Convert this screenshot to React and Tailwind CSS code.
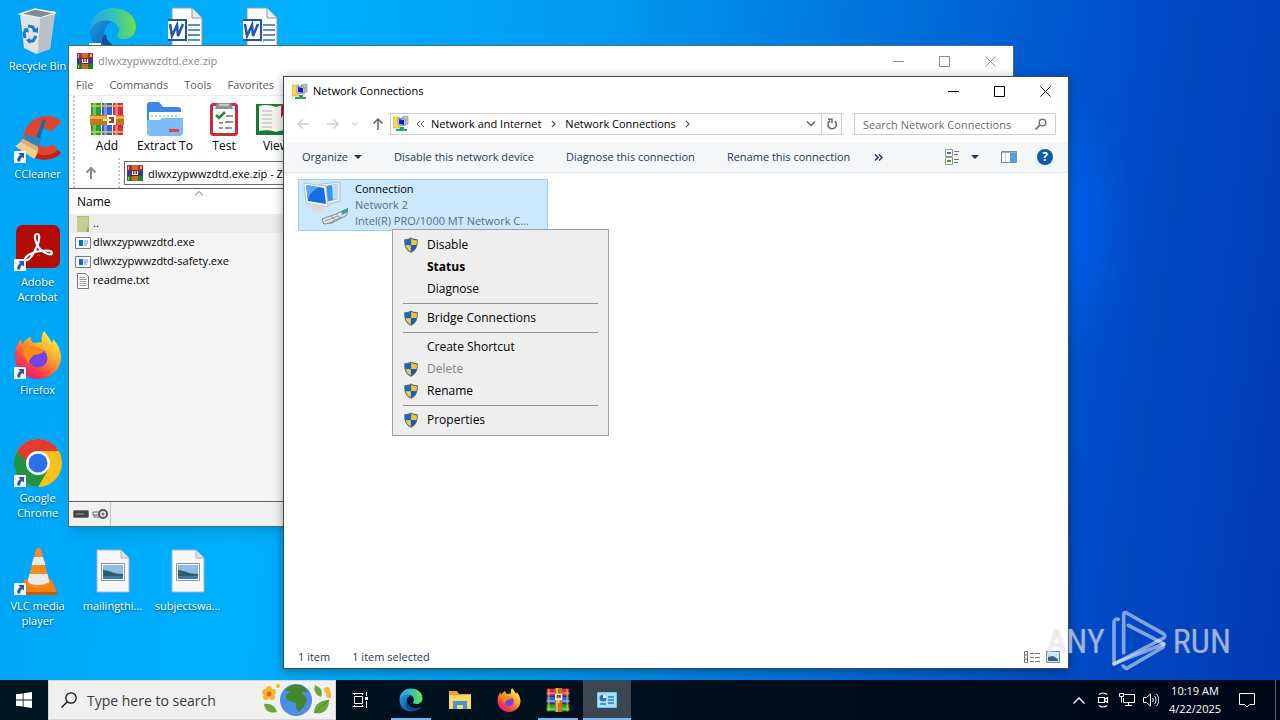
import clsx from 'clsx'

/* ---------- shared drawings ---------- */

function Svg({ className, box = '0 0 16 16', children }) {
  return (
    <svg className={clsx('block shrink-0', className)} viewBox={box} fill="none" aria-hidden="true">
      {children}
    </svg>
  )
}

function ShortcutArrow() {
  return (
    <Svg className="absolute bottom-0 left-0 size-3" box="0 0 12 12">
      <path d="M0 0h12v12H0z" fill="#f4f6fa" />
      <path d="M4.500 2H10v5.500L8.300 5.900C6.600 7 6.100 8.300 6.200 10.500H3.600C2.800 7.800 3.800 5.500 6.300 3.900z" fill="#2a57a5" />
    </Svg>
  )
}

function RecycleIcon({ className }) {
  return (
    <Svg className={className} box="0 0 48 48">
      <path d="M6 7l35-3-5 38-14 5-12-6z" fill="#d9dde0" />
      <path d="M6 7l15-5 21 4-16 5z" fill="#7d8b93" stroke="#f3f5f6" strokeWidth="1.500" />
      <path d="M26 11l15-4-5 35-12 4z" fill="#b9c1c6" />
      <path d="M7 8l19 3-3 34-12-5z" fill="#dfe3e6" />
      <path d="M14 19l5 1 2 5M22 29l-3 5h-5M11 31l-1-5 3-4" stroke="#1c78c8" strokeWidth="3" />
      <path d="M18 24l6 2 0-6zM16 31l0 6-4-4zM9 22l5-1 1 5z" fill="#1c78c8" />
    </Svg>
  )
}

function EdgeIcon({ className }) {
  return (
    <Svg className={className} box="0 0 48 48">
      <defs>
        <linearGradient id="edge-top" x1="2" y1="22" x2="46" y2="18" gradientUnits="userSpaceOnUse">
          <stop stopColor="#2aa8e0" />
          <stop offset=".5" stopColor="#2fc2c0" />
          <stop offset="1" stopColor="#6fdc4c" />
        </linearGradient>
        <linearGradient id="edge-low" x1="2" y1="20" x2="30" y2="48" gradientUnits="userSpaceOnUse">
          <stop stopColor="#1b8fdd" />
          <stop offset="1" stopColor="#0d4f9e" />
        </linearGradient>
      </defs>
      <path d="M1 24C1 10 11 1 24 1c14 0 23 9 23 19 0 8-6 12-12 12-5 0-8-2-7-4 3-3 3-8-2-12-7-5-19-3-25 8z" fill="url(#edge-top)" />
      <path d="M1 24c3-9 15-13 22-9-6 2-9 9-7 16 3 9 15 13 26 7-5 7-11 9-18 9C11 47 1 37 1 24z" fill="url(#edge-low)" />
      <path d="M17 27c0 8 8 14 17 13 5 0 9-2 10-3 1 0-1 3-4 5-7 5-17 5-23-1-5-5-5-11 0-14z" fill="#114a8b" />
    </Svg>
  )
}

function WordIcon({ className }) {
  return (
    <Svg className={className} box="3 0 40 48">
      <path d="M7 1h20l10 10v36H7z" fill="#fff" stroke="#8e9aa5" />
      <path d="M27 1v10h10" fill="#e7ebef" stroke="#8e9aa5" />
      <path d="M23 18h12M23 23h12M23 28h12M23 33h12" stroke="#2b6bc0" strokeWidth="1.500" />
      <path d="M1 13h20v20H1z" fill="#fff" stroke="#1e56b0" strokeWidth="2" />
      <path d="M5 17l2 12 5-11 1 11 5-12" stroke="#1e56b0" strokeWidth="2.500" />
    </Svg>
  )
}

function CCleanerIcon({ className }) {
  return (
    <Svg className={className} box="0 0 48 48">
      <path d="M47 7C41-1 25-1 16 8c-9 9-9 24 0 32 9 7 24 6 31-2l-9-9c-4 4-10 4-13 0-4-4-3-10 0-13 4-4 9-3 12 1z" fill="#e2452d" />
      <path d="M16 40c9 7 24 6 31-2l-3-3c-8 7-19 7-26 0z" fill="#b92718" />
      <path d="M29 4l3 1-6 19-4-2z" fill="#196aa8" />
      <path d="M13 19l14 6c-1 5-3 7-5 8L9 25z" fill="#2b83c3" />
      <path d="M9 24l15 8c0 5-1 8-4 12L1 31c2-1 6-4 8-7z" fill="#f1cf95" />
      <path d="M9 24l15 8-1 4-17-9z" fill="#e0b070" />
    </Svg>
  )
}

function AcrobatIcon({ className }) {
  return (
    <Svg className={className} box="0 0 48 48">
      <rect x="2" y="2" width="44" height="43" rx="7" fill="#b30b00" />
      <path
        d="M23 11c3 0 3 5 0 12-3 8-8 15-11 14-3-2 4-8 15-9 8-1 11 0 11 2 0 3-7 1-12-4-5-6-7-15-3-15z"
        stroke="#fff"
        strokeWidth="2.200"
      />
    </Svg>
  )
}

function FirefoxIcon({ className }) {
  return (
    <Svg className={className} box="0 0 48 48">
      <defs>
        <linearGradient id="fx-body" x1="40" y1="6" x2="10" y2="46" gradientUnits="userSpaceOnUse">
          <stop stopColor="#fff04a" />
          <stop offset=".4" stopColor="#ff9d28" />
          <stop offset=".75" stopColor="#ff3b47" />
          <stop offset="1" stopColor="#e31587" />
        </linearGradient>
      </defs>
      <path d="M30 0c4 5 6 8 8 12 1-1 1-3 1-4 5 5 8 12 8 18 0 12-10 22-23 22S1 38 1 25c0-7 2-12 6-17 0 3 1 4 2 5 1-3 4-6 8-7-1 3 1 5 3 6l8-1c-1-4 0-8 2-11z" fill="url(#fx-body)" />
      <circle cx="24" cy="27" r="9.500" fill="#7542e5" />
      <path d="M8 15c5-2 12-1 16 3 4 0 7 1 6 2-2 3-6 3-10 4-2 2-5 4-5 8-4-5-7-11-7-17z" fill="#ff8a16" />
    </Svg>
  )
}

function ChromeIcon({ className }) {
  return (
    <Svg className={className} box="0 0 48 48">
      <circle cx="24" cy="24" r="24" fill="#fbc116" />
      <path d="M3.200 12a24 24 0 0 1 41.600 0H24L13.600 30z" fill="#e53a2f" />
      <path d="M3.200 12a24 24 0 0 0 20.800 36l10.400-18-10.400 6z" fill="#229342" />
      <path d="M3.200 12l10.400 18L24 36l10.400-6L24 48z" fill="#229342" />
      <circle cx="24" cy="24" r="12" fill="#fff" />
      <circle cx="24" cy="24" r="9.500" fill="#2a71e8" />
    </Svg>
  )
}

function VlcIcon({ className }) {
  return (
    <Svg className={className} box="0 0 48 48">
      <path d="M11 32h26l6 13c0 2-1 2-2 2H7c-1 0-2 0-2-2z" fill="#f08010" />
      <path d="M5 45h38v3H5z" fill="#c95c05" />
      <path d="M22 3c1-3 4-3 5 0l9 34c-6 5-18 5-23 0z" fill="#ff8a1c" />
      <path d="M20 10h9l2.500 8h-14zM15.500 27h18l2 8c-6 4-17 4-22 0z" fill="#e9e9e9" />
    </Svg>
  )
}

function PictureFileIcon({ className }) {
  return (
    <Svg className={className} box="0 0 34 44">
      <path d="M1 1h24l8 8v34H1z" fill="#f7f7f8" stroke="#a9b4bc" />
      <path d="M25 1v8h8" fill="#dfe3e7" stroke="#a9b4bc" />
      <path d="M5.500 14.500h23v17h-23z" fill="#fff" stroke="#8a99a8" />
      <path d="M7 16h20v14H7z" fill="#8fbbea" />
      <path d="M7 21c6 0 10 4 20 4v5H7z" fill="#2d5f6b" />
      <path d="M7 27h20v3H7z" fill="#3f79b5" />
    </Svg>
  )
}

// The three books held by a belt; upright in the toolbar, lying down elsewhere
function WinRarIcon({ className, upright }) {
  return (
    <Svg className={className} box="0 0 34 34">
      <g transform={upright ? undefined : 'rotate(-90 17 17)'}>
        <path d="M1 1h10v32H1z" fill="#22a12c" />
        <path d="M12 1h10v32H12z" fill="#2e62d9" />
        <path d="M23 1h10v32H23z" fill="#d72a4c" />
        <path d="M3 1h3v32H3zM14 1h3v32h-3zM25 1h3v32h-3z" fill="#fff" opacity=".35" />
        <path d="M1 3h32v2H1zM1 29h32v2H1z" fill="#f0c030" opacity=".75" />
        <path d="M0 13h34v10H0z" fill="#c4741b" />
        <path d="M0 14h34v3H0z" fill="#f0ac46" />
        <path d="M18 14h7v8h-7z" fill="#9b4a12" stroke="#fff" strokeWidth="2" />
        <path d="M13 18h8" stroke="#ffe6a0" strokeWidth="2" />
      </g>
    </Svg>
  )
}

function SmallRarIcon({ className }) {
  return (
    <Svg className={className}>
      <path d="M0 0h16v5H0z" fill="#a8275c" />
      <path d="M0 5h16v6H0z" fill="#2c3f9c" />
      <path d="M0 11h16v5H0z" fill="#1f7d2e" />
      <path d="M1 1h1v4H1zM1 12h1v3H1zM13 1h2v3h-2z" fill="#e8b53a" />
      <path d="M5 0h6v16H5z" fill="#cc6a20" />
      <path d="M4 5h8v6H4z" fill="#8b1d13" />
      <path d="M5.500 6v3.500h5V6M8 6v3" stroke="#fff" strokeWidth="1.200" />
    </Svg>
  )
}

function NetworkFolderIcon({ className }) {
  return (
    <Svg className={className}>
      <path d="M0 1h7v11H0z" fill="#f5d560" stroke="#c9a52c" strokeWidth=".6" />
      <path d="M9 1l6-1v8l-4 1z" fill="#b9c4cf" stroke="#74818e" strokeWidth=".6" />
      <path d="M5 2l7 1v7l-7-1z" fill="#e8edf2" stroke="#65707b" strokeWidth=".6" />
      <path d="M6 3l5 1v5L6 8z" fill="#1420c8" />
      <path d="M7 11h4v2h3v2H3v-2h4z" fill="#27a56a" />
    </Svg>
  )
}

function ConnectionIcon({ className }) {
  return (
    <Svg className={className} box="0 0 48 48">
      <path d="M18 3l19-2v19l-14 4z" fill="#eef1f3" stroke="#b3bcc4" />
      <path d="M22 5l13-2v15l-12 3z" fill="#3b93f2" />
      <path d="M29 4l6-1v15l-5 1z" fill="#b8dcfa" />
      <path d="M9 23l11 3 4 3c0 3-12 4-16 0-2-2 0-4 1-6z" fill="#d9dce0" />
      <path d="M1 2l22 3 2 21L3 22z" fill="#f7f8f9" stroke="#bcc4ca" />
      <path d="M3 4l18 3 2 16L5 20z" fill="#176be6" />
      <path d="M3 4l13 2C10 9 6 13 5 20z" fill="#5aa6fa" />
      <path d="M19 38l14-5 11-5v6l-15 8-8 1z" fill="#dfe5e8" stroke="#7b8a92" />
      <path d="M22 40l13-5M26 42l13-6M33 33l4 4M28 35l4 4" stroke="#8b979e" />
      <path d="M38 30l7-3v4l-6 3z" fill="#3e9fa3" />
    </Svg>
  )
}

function ShieldIcon() {
  return (
    <Svg className="size-4">
      <path d="M8 .5C6 1.800 3.800 2.300 1.200 2.200c-.2 6.500 1.200 11 6.800 13.500 5.600-2.500 7-7 6.800-13.500C12.200 2.300 10 1.800 8 .5z" fill="#5a6a78" />
      <path d="M7.800 1.700C6 2.900 4.300 3.200 2.200 3.200c-.1 1.700 0 3.200.4 4.700h5.200z" fill="#1668c9" />
      <path d="M8.200 1.700c1.800 1.200 3.500 1.500 5.600 1.500.1 1.700 0 3.200-.4 4.700H8.200z" fill="#fbc32e" />
      <path d="M2.700 8.200h5.100v6.300C5.100 13.100 3.400 11 2.700 8.200z" fill="#e9cf62" />
      <path d="M13.300 8.200H8.200v6.300c2.700-1.400 4.400-3.500 5.100-6.300z" fill="#1359ad" />
    </Svg>
  )
}

/* ---------- desktop ---------- */

const DESKTOP_ICONS = [
  { id: 'recycle', label: 'Recycle Bin', Icon: RecycleIcon, cell: 'col-start-1 row-start-1' },
  { id: 'edge', Icon: EdgeIcon, cell: 'col-start-2 row-start-1', shortcut: true },
  { id: 'doc-1', Icon: WordIcon, cell: 'col-start-3 row-start-1', size: 'h-12 w-10' },
  { id: 'doc-2', Icon: WordIcon, cell: 'col-start-4 row-start-1', size: 'h-12 w-10' },
  { id: 'ccleaner', label: 'CCleaner', Icon: CCleanerIcon, cell: 'col-start-1 row-start-2', shortcut: true },
  { id: 'acrobat', label: 'Adobe Acrobat', Icon: AcrobatIcon, cell: 'col-start-1 row-start-3', shortcut: true },
  { id: 'firefox', label: 'Firefox', Icon: FirefoxIcon, cell: 'col-start-1 row-start-4', shortcut: true },
  { id: 'chrome', label: 'Google Chrome', Icon: ChromeIcon, cell: 'col-start-1 row-start-5', shortcut: true },
  { id: 'vlc', label: 'VLC media player', Icon: VlcIcon, cell: 'col-start-1 row-start-6', shortcut: true },
  { id: 'img-1', label: 'mailingthi...', Icon: PictureFileIcon, cell: 'col-start-2 row-start-6', size: 'h-11 w-[34px]' },
  { id: 'img-2', label: 'subjectswa...', Icon: PictureFileIcon, cell: 'col-start-3 row-start-6', size: 'h-11 w-[34px]' },
]

function DesktopIcon({ id, label, Icon, cell, size = 'size-12', shortcut }) {
  return (
    <button type="button" aria-label={label ?? id} className={clsx('flex flex-col items-center pt-[7px] text-white', cell)}>
      <span className="relative flex size-12 items-center justify-center">
        <Icon className={size} />
        {shortcut && <ShortcutArrow />}
      </span>
      {label && (
        <span className="w-[68px] pt-[3px] text-center leading-[15px] [text-shadow:0_1px_2px_rgba(0,0,0,0.6)]">
          {label}
        </span>
      )}
    </button>
  )
}

function CaptionButtons() {
  return (
    <div className="flex h-full">
      <button type="button" aria-label="Minimize" className="flex w-[46px] items-center justify-center">
        <Svg className="size-[11px]" box="0 0 11 11">
          <path d="M0 5.500h11" stroke="currentColor" />
        </Svg>
      </button>
      <button type="button" aria-label="Maximize" className="flex w-[46px] items-center justify-center">
        <Svg className="size-[11px]" box="0 0 11 11">
          <path d="M.5.5h10v10H.5z" stroke="currentColor" />
        </Svg>
      </button>
      <button type="button" aria-label="Close" className="flex w-[46px] items-center justify-center">
        <Svg className="size-[11px]" box="0 0 11 11">
          <path d="M.5.5l10 10M10.500.5l-10 10" stroke="currentColor" />
        </Svg>
      </button>
    </div>
  )
}

/* ---------- archive window ---------- */

function ExtractIcon() {
  return (
    <Svg className="h-[34px] w-9" box="0 0 36 34">
      <path d="M0 3c0-2 1-3 3-3h9l4 5h15c2 0 3 1 3 3v20H0z" fill="#3d86e8" />
      <path d="M2 10h32v10H2z" fill="#f8fafc" />
      <path d="M5 13v2M9 13v2M13 13v2M17 13v2M21 13v2M25 13v2M29 13v2" stroke="#9aa8b5" />
      <path d="M0 18h13l2-2h21v14c0 2-1 4-3 4H3c-2 0-3-2-3-4z" fill="#7dbcf8" />
      <path d="M22 27h10v3H22z" fill="#e5482f" />
    </Svg>
  )
}

function TestIcon() {
  return (
    <Svg className="h-[34px] w-7" box="0 0 28 34">
      <rect x="1.500" y="2.500" width="25" height="30" rx="2" fill="#fff" stroke="#cf2a38" strokeWidth="3" />
      <path d="M7 1h14l2 6H5z" fill="#8a9298" />
      <path d="M9 3h10" stroke="#fff" />
      <path d="M6 13l3 3 6-6" stroke="#1f8a3a" strokeWidth="2.500" />
      <path d="M16 14h7M9 21h4M15 20h8M9 26h4M15 26h7" stroke="#777" strokeWidth="1.500" />
    </Svg>
  )
}

function ViewIcon() {
  return (
    <Svg className="h-[34px] w-10" box="0 0 40 34">
      <path d="M0 2h40v31H0z" fill="#1c7a35" />
      <path d="M3 4c6-2 12-1 17 1v25c-5-2-11-2-17-1zM37 4c-6-2-12-1-17 1v25c5-2 11-2 17-1z" fill="#f4f4f1" />
      <path d="M6 9h10M6 13h10M6 17h10M6 21h10M6 25h10" stroke="#b5b5b0" />
      <path d="M25 2h5v14l-3-3-2 3z" fill="#b1222d" />
    </Svg>
  )
}

function ExeIcon() {
  return (
    <Svg className="h-3 w-4" box="0 0 16 12">
      <path d="M.5.5h15v11H.5z" fill="#fff" stroke="#6e7d94" />
      <path d="M4 3h4v6H4z" fill="#0b6fd0" />
      <path d="M9 4h4M9 6h4M9 8h3" stroke="#5c8fc4" />
    </Svg>
  )
}

function TextFileIcon() {
  return (
    <Svg className="h-4 w-3" box="0 0 12 16">
      <path d="M.5.5h8l3 3v12H.5z" fill="#fff" stroke="#777" />
      <path d="M2.500 4.500h5M2.500 6.500h7M2.500 8.500h7M2.500 10.500h7M2.500 12.500h7" stroke="#999" />
    </Svg>
  )
}

function UpFolderIcon() {
  return (
    <Svg className="h-4 w-3" box="0 0 12 16">
      <path d="M0 0h12v16H0z" fill="#c6cd8e" />
      <path d="M0 0h12v16" stroke="#a7ae6e" />
      <path d="M10 11h2v5h-3z" fill="#a1a96a" />
    </Svg>
  )
}

const TOOLS = [
  { label: 'Add', icon: <WinRarIcon upright className="size-[34px]" />, width: 'w-[58px]' },
  { label: 'Extract To', icon: <ExtractIcon />, width: 'w-[58px]' },
  { label: 'Test', icon: <TestIcon />, width: 'w-[60px]' },
  { label: 'View', icon: <ViewIcon />, width: 'w-11' },
]

const FILES = [
  { name: '..', icon: <UpFolderIcon />, row: 'bg-[#ececec]' },
  { name: 'dlwxzypwwzdtd.exe', icon: <ExeIcon /> },
  { name: 'dlwxzypwwzdtd-safety.exe', icon: <ExeIcon /> },
  { name: 'readme.txt', icon: <TextFileIcon /> },
]

function ArchiveWindow() {
  return (
    <section className="absolute top-[45px] right-[266px] bottom-[153px] left-[68px] flex flex-col overflow-hidden border border-[#4b6b80] bg-white shadow-lg">
      <header className="flex h-[30px] shrink-0 items-center pl-2 text-[#8c8c8c]">
        <SmallRarIcon className="size-4" />
        <h2 className="flex-1 pl-[5px]">dlwxzypwwzdtd.exe.zip</h2>
        <CaptionButtons />
      </header>
      <nav className="flex h-5 shrink-0 items-center gap-4 border-b border-[#ececec] pl-[7px] text-[#5c5c5c]">
        <button type="button">File</button>
        <button type="button">Commands</button>
        <button type="button">Tools</button>
        <button type="button">Favorites</button>
      </nav>
      <div className="ml-1 flex h-[62px] shrink-0 items-start border-l-2 border-dotted border-[#c8c8c8] pt-1.5 pl-[3px]">
        {TOOLS.map((tool) => (
          <button key={tool.label} type="button" className={clsx('flex flex-col items-center text-xs leading-4 whitespace-nowrap', tool.width)}>
            {tool.icon}
            <span className="pt-0.5">{tool.label}</span>
          </button>
        ))}
      </div>
      <div className="ml-1 flex h-[30px] shrink-0 items-center border-l-2 border-dotted border-[#c8c8c8]">
        <button type="button" aria-label="Up one level" className="flex w-8 justify-center">
          <Svg className="size-3" box="0 0 12 12">
            <path d="M6 12V1M1.500 5.500L6 1l4.500 4.500" stroke="#8a8a8a" strokeWidth="2" />
          </Svg>
        </button>
        <label className="ml-[11px] flex h-full flex-1 items-center border-l-2 border-dotted border-[#c8c8c8] pl-1">
          <span className="sr-only">Address</span>
          <span className="flex h-6 flex-1 items-center border border-[#6c6c6c] pl-0.5">
            <SmallRarIcon className="size-4" />
            <input className="h-5 min-w-0 flex-1 pl-[5px] outline-none" defaultValue="dlwxzypwwzdtd.exe.zip - ZIP archive" />
          </span>
        </label>
      </div>
      <div className="relative min-h-0 flex-1 border-t border-b border-[#5f5f5f] bg-[#f5f5f5]">
        <Svg className="absolute top-0.5 left-[126px] h-[5px] w-2" box="0 0 8 5">
          <path d="M0 4.500l4-4 4 4" stroke="#666" />
        </Svg>
        <table className="w-full text-left">
          <thead>
            <tr className="h-[25px] bg-white">
              <th className="pl-2 text-xs font-normal">Name</th>
            </tr>
          </thead>
          <tbody>
            {FILES.map((file) => (
              <tr key={file.name} className={clsx('h-[19px]', file.row)}>
                <td className="p-0">
                  <span className="flex h-[19px] items-center gap-0.5 pl-1.5">
                    <span className="flex w-4 justify-center">{file.icon}</span>
                    {file.name}
                  </span>
                </td>
              </tr>
            ))}
          </tbody>
        </table>
      </div>
      <footer className="flex h-6 shrink-0 items-center bg-[#f0f0f0]">
        <div className="flex h-full items-center gap-[3px] border-r border-[#c4c4c4] pr-0.5 pl-1">
          <Svg className="h-2 w-4" box="0 0 16 8">
            <rect x=".5" y=".5" width="15" height="7" rx="1" fill="#444" stroke="#777" />
            <path d="M3 4h8" stroke="#aaa" />
          </Svg>
          <Svg className="h-3 w-4" box="0 0 16 12">
            <circle cx="11" cy="6" r="4" stroke="#555" strokeWidth="2" />
            <circle cx="11" cy="6" r="1.500" fill="#777" />
            <path d="M7 4H1v3h6M2 7v2h5" stroke="#666" />
          </Svg>
        </div>
      </footer>
    </section>
  )
}

/* ---------- network window ---------- */

const COMMANDS = ['Disable this network device', 'Diagnose this connection', 'Rename this connection']

function NavArrow({ label, d, color, className }) {
  return (
    <button type="button" aria-label={label} className={clsx('flex justify-center', className)}>
      <Svg className="size-3" box="0 0 12 12">
        <path d={d} stroke={color} strokeWidth="1.500" />
      </Svg>
    </button>
  )
}

function Chevron() {
  return (
    <Svg className="h-2 w-[5px]" box="0 0 5 8">
      <path d="M1 1l3 3-3 3" stroke="#555" strokeWidth="1.200" />
    </Svg>
  )
}

function NetworkWindow() {
  return (
    <section className="absolute top-[76px] right-[211px] bottom-[11px] left-[283px] flex flex-col border border-[#3c4a58] bg-white shadow-[0_2px_10px_rgba(0,0,0,0.35)]">
      <header className="flex h-[29px] shrink-0 items-center pl-2">
        <NetworkFolderIcon className="size-4" />
        <h1 className="flex-1 pl-[5px]">Network Connections</h1>
        <CaptionButtons />
      </header>

      <div className="flex h-9 shrink-0 items-center pr-3">
        <NavArrow label="Back" d="M12 6H1M5.500 1.500L1 6l4.500 4.500" color="#cfcfcf" className="w-[38px]" />
        <NavArrow label="Forward" d="M0 6h11M6.500 1.500L11 6l-4.500 4.500" color="#cfcfcf" className="w-[22px]" />
        <NavArrow label="Recent locations" d="M3.500 4.500L6 7l2.500-2.500" color="#d5d5d5" className="w-[22px]" />
        <NavArrow label="Up" d="M6 12V1M1.500 5.500L6 1l4.500 4.500" color="#666" className="w-6" />
        <div className="flex h-[22px] flex-1 items-center border border-[#d0d0d0] pl-0.5">
          <NetworkFolderIcon className="size-4" />
          <button type="button" aria-label="More locations" className="flex w-[22px] justify-center">
            <Svg className="h-2 w-[9px]" box="0 0 9 8">
              <path d="M4 1L1 4l3 3M8 1L5 4l3 3" stroke="#555" />
            </Svg>
          </button>
          <button type="button">Network and Internet</button>
          <span className="flex w-6 justify-center">
            <Chevron />
          </span>
          <button type="button">Network Connections</button>
          <span className="flex w-6 justify-center">
            <Chevron />
          </span>
          <span className="flex-1" />
          <button type="button" aria-label="Previous locations" className="flex w-5 justify-center">
            <Svg className="h-[6px] w-[10px]" box="0 0 10 6">
              <path d="M1 .5l4 4 4-4" stroke="#666" strokeWidth="1.500" />
            </Svg>
          </button>
          <button type="button" aria-label="Refresh" className="flex h-full w-5 items-center justify-center border-l border-[#d0d0d0]">
            <Svg className="size-3" box="0 0 12 12">
              <path d="M8.800 3.200a4.200 4.200 0 1 1-4.600-.4" stroke="#666" strokeWidth="1.600" />
              <path d="M2 1.200h4v4" stroke="#666" strokeWidth="1.400" />
            </Svg>
          </button>
        </div>
        <label className="ml-3 flex h-[22px] w-[202px] items-center border border-[#d0d0d0] pr-2 pl-2">
          <span className="sr-only">Search Network Connections</span>
          <input type="text" placeholder="Search Network Connections" className="h-5 min-w-0 flex-1 outline-none placeholder:text-[#6d6d6d]" />
          <Svg className="size-3" box="0 0 12 12">
            <circle cx="7.500" cy="4.500" r="3.300" stroke="#777" strokeWidth="1.500" />
            <path d="M5 7l-4.500 4.500" stroke="#777" strokeWidth="1.800" />
          </Svg>
        </label>
      </div>

      <div className="flex h-[31px] shrink-0 items-center border-b border-[#e6e9ec] bg-[#f5f6f7] pr-[15px] pl-[18px] text-[#1e395b]">
        <div className="flex flex-1 items-center gap-8">
          <button type="button" className="flex items-center gap-1.5">
            Organize
            <Svg className="h-1 w-2" box="0 0 8 4">
              <path d="M0 0h8L4 4z" fill="#1e395b" />
            </Svg>
          </button>
          {COMMANDS.map((command) => (
            <button key={command} type="button">
              {command}
            </button>
          ))}
          <button type="button" aria-label="More commands" className="-ml-2">
            <Svg className="h-[7px] w-[9px]" box="0 0 9 7">
              <path d="M1 .5l3 3-3 3M5 .5l3 3-3 3" stroke="#1e395b" strokeWidth="1.500" />
            </Svg>
          </button>
        </div>
        <button type="button" aria-label="Change your view" className="flex items-center gap-2.5">
          <Svg className="size-4">
            <path d="M.5.5h7v7h-7zM.5 8.500h7v7h-7z" fill="#fff" stroke="#8d9a85" />
            <path d="M2 3h4v2H2z" fill="#3a74b8" />
            <path d="M2 11h4v2H2z" fill="#5f8f45" />
            <path d="M9 2.500h5M9 5.500h4M9 10.500h5M9 13.500h4" stroke="#777" />
          </Svg>
          <Svg className="h-1 w-2" box="0 0 8 4">
            <path d="M0 0h8L4 4z" fill="#1e395b" />
          </Svg>
        </button>
        <button type="button" aria-label="Show the preview pane" className="ml-[22px]">
          <Svg className="h-3 w-4" box="0 0 16 12">
            <path d="M.5.5h15v11H.5z" fill="#fff" stroke="#7d8b99" />
            <path d="M1 1h14v1H1z" fill="#9db0c2" />
            <path d="M9 2h6v9H9z" fill="#4ba3e3" />
            <path d="M4.500 2v9" stroke="#c3ccd4" />
          </Svg>
        </button>
        <button type="button" aria-label="Get help" className="ml-5 flex size-4 items-center justify-center rounded-full bg-[#0b5cad] text-xs font-bold text-white">
          ?
        </button>
      </div>

      <main className="min-h-0 flex-1 pt-1.5 pl-3.5">
        <button type="button" className="flex h-[52px] w-[250px] items-start border border-[#99d1ff] bg-[#cce8ff] pt-px pl-1 text-left">
          <ConnectionIcon className="size-12" />
          <span className="flex min-w-0 flex-1 flex-col pl-1 leading-4 text-[#566e86]">
            <span className="text-black">Connection</span>
            <span>Network 2</span>
            <span>Intel(R) PRO/1000 MT Network C...</span>
          </span>
        </button>
      </main>

      <footer className="flex h-[22px] shrink-0 items-center pr-2 pl-3.5 text-[#1e395b]">
        <span>1 item</span>
        <span className="ml-2.5 flex-1 pl-3">1 item selected</span>
        <button type="button" aria-label="Details view" className="mr-1.5">
          <Svg className="h-3 w-4" box="0 0 16 12">
            <path d="M.5.5h3v11h-3zM1 4h3M1 8h3" stroke="#777" />
            <path d="M6 2.500h4M11 2.500h5M6 6.500h4M11 6.500h5M6 10.500h4M11 10.500h5" stroke="#777" />
          </Svg>
        </button>
        <button type="button" aria-label="Large icons view">
          <Svg className="h-3 w-3.5" box="0 0 14 12">
            <path d="M.5.5h13v11H.5z" fill="#cfe5f7" stroke="#6f8da6" />
            <path d="M2 6l5-1 5 3v2H2z" fill="#31657c" />
          </Svg>
        </button>
      </footer>
    </section>
  )
}

/* ---------- context menu ---------- */

const MENU_GROUPS = [
  [
    { label: 'Disable', shield: true },
    { label: 'Status', style: 'font-bold' },
    { label: 'Diagnose' },
  ],
  [{ label: 'Bridge Connections', shield: true }],
  [
    { label: 'Create Shortcut' },
    { label: 'Delete', shield: true, style: 'text-[#838383]', disabled: true },
    { label: 'Rename', shield: true },
  ],
  [{ label: 'Properties', shield: true }],
]

function ContextMenu() {
  return (
    <div role="menu" className="absolute top-[229px] left-[392px] w-[217px] border border-[#a0a0a0] bg-[#eee] py-1 text-xs">
      {MENU_GROUPS.map((group, i) => (
        <div key={group[0].label} role="group">
          {i > 0 && <div role="separator" className="mx-2.5 my-[3px] h-px bg-[#919191]" />}
          {group.map((item) => (
            <button
              key={item.label}
              type="button"
              role="menuitem"
              disabled={item.disabled}
              className={clsx('flex h-[22px] w-full items-center pl-2.5 text-left', item.style)}
            >
              <span className="w-6">{item.shield && <ShieldIcon />}</span>
              {item.label}
            </button>
          ))}
        </div>
      ))}
    </div>
  )
}

/* ---------- watermark ---------- */

function Watermark() {
  return (
    <div className="pointer-events-none absolute right-[49px] bottom-2 flex items-center gap-1.5 font-['Roboto_Condensed','Open_Sans_Condensed',Roboto,sans-serif] text-[34px] text-white/55 [text-shadow:0_0_2px_rgba(120,130,150,0.4)]">
      <span>ANY</span>
      <Svg className="h-[62px] w-[56px]" box="0 0 168 186">
        <g stroke="#fff" strokeOpacity=".5" strokeWidth="11" strokeLinejoin="round" strokeLinecap="round">
          <path d="M22 28c-8-2-13 2-13 8v126l22-10 128-50" />
          <path d="M38 128V14c0-6 5-8 9-5l110 62c6 4 6 10 1 13L9 162" />
          <path d="M52 46l100 52c8 5 8 12 0 16L46 176l-10-8" />
        </g>
      </Svg>
      <span>RUN</span>
    </div>
  )
}

/* ---------- taskbar ---------- */

function EarthArt() {
  return (
    <Svg className="h-9 w-[70px]" box="0 0 70 36">
      <path d="M3 22c7-1 11 2 13 8-7 2-12-1-13-8zM54 3c7 3 8 7 6 12-5-2-8-6-6-12zM68 18c-9 0-15 5-15 13 9 2 15-3 15-13z" fill="#69a83a" />
      <path d="M54 31c4-5 8-8 14-13" stroke="#3e7c24" />
      <circle cx="35" cy="18" r="16" fill="#4a8ee8" />
      <path d="M24 8c4-5 14-7 19-3l5 5c-2 1-5-1-7 1l5 6c-1 6-5 10-8 13-4-2-2-7-4-10-4 0-9-1-9-5 0-3 3-5 6-4z" fill="#44862c" />
      <g fill="#f6b62c">
        <circle cx="8" cy="7" r="3" />
        <circle cx="12" cy="10" r="3" />
        <circle cx="11" cy="15" r="3" />
        <circle cx="5" cy="15" r="3" />
        <circle cx="4" cy="10" r="3" />
        <circle cx="66" cy="8" r="3" />
        <circle cx="68" cy="13" r="3" />
        <circle cx="17" cy="4" r="2" />
      </g>
      <circle cx="8" cy="12" r="2.500" fill="#e8672a" />
    </Svg>
  )
}

function ExplorerIcon({ className }) {
  return (
    <Svg className={className} box="0 0 24 24">
      <path d="M1 3h8l2 3h12v15H1z" fill="#e8a52c" />
      <path d="M1 7h22v14H1z" fill="#fcd667" />
      <path d="M5 21v-7c0-1 1-1 1-1h12s1 0 1 1v7h-4v-4H9v4z" fill="#3f96d8" />
    </Svg>
  )
}

function ControlPanelIcon({ className }) {
  return (
    <Svg className={className} box="0 0 24 24">
      <rect x="2" y="4" width="20" height="16" rx="1" fill="#6fcaf5" />
      <path d="M3 5h18v14H3z" fill="#a8e1fb" />
      <circle cx="8" cy="10" r="3.500" fill="#2775b8" />
      <path d="M8 6.500V10h3.500A3.500 3.500 0 0 0 8 6.500z" fill="#fff" />
      <path d="M13 9h6M13 12h6M13 15h6M5 16h6" stroke="#2380c4" strokeWidth="1.500" />
    </Svg>
  )
}

const TASKS = [
  { label: 'Microsoft Edge', Icon: EdgeIcon, underline: 'mx-1 bg-[#76b9ed]' },
  { label: 'File Explorer', Icon: ExplorerIcon },
  { label: 'Firefox', Icon: FirefoxIcon },
  { label: 'WinRAR', Icon: WinRarIcon, underline: 'mx-1 bg-[#76b9ed]' },
  { label: 'Network Connections', Icon: ControlPanelIcon, underline: 'bg-[#76b9ed]', style: 'bg-[#3b4650]' },
]

function Taskbar() {
  return (
    <footer className="flex h-10 shrink-0 items-stretch bg-linear-to-r from-[#001722] to-[#000718] text-white">
      <button type="button" aria-label="Start" className="flex w-12 items-center justify-center">
        <Svg className="size-4">
          <path d="M0 2.300L6.700 1.400v6.200H0zM7.500 1.300L16 0v7.600H7.500zM0 8.400h6.700v6.200L0 13.700zM7.500 8.400H16V16l-8.500-1.300z" fill="#fff" />
        </Svg>
      </button>
      <label className="flex w-72 items-center border border-[#d5d5d5] bg-[#f0f0f0] pr-1 pl-3 text-black">
        <span className="sr-only">Type here to search</span>
        <Svg className="size-4">
          <circle cx="10" cy="6" r="5.200" stroke="#111" strokeWidth="1.300" />
          <path d="M6.300 9.700L.5 15.500" stroke="#111" strokeWidth="1.300" />
        </Svg>
        <input type="text" placeholder="Type here to search" className="h-7 min-w-0 flex-1 pl-2.5 text-sm outline-none placeholder:text-[#3b3b3b]" />
        <EarthArt />
      </label>
      <button type="button" aria-label="Task View" className="flex w-12 items-center justify-center">
        <Svg className="size-4">
          <path d="M2.500 4.500h8v7h-8zM.5 1.500h11M.5 14.500h11M2.500 1v2M10.500 1v2M2.500 13v2M10.500 13v2" stroke="#fff" />
          <path d="M14.500 0v4M14.500 9v7" stroke="#fff" />
          <path d="M13 5h3v3h-3z" fill="#fff" />
        </Svg>
      </button>
      <div className="ml-[3px] flex flex-1 gap-px">
        {TASKS.map(({ label, Icon, underline, style }) => (
          <button key={label} type="button" aria-label={label} className={clsx('flex w-12 flex-col', style)}>
            <span className="flex flex-1 items-center justify-center pt-0.5">
              <Icon className="size-6" />
            </span>
            <span className={clsx('h-0.5 self-stretch', underline)} />
          </button>
        ))}
      </div>
      <div className="flex items-center">
        <button type="button" aria-label="Show hidden icons" className="flex w-6 justify-center">
          <Svg className="h-[7px] w-3" box="0 0 12 7">
            <path d="M.5 6.500L6 1l5.500 5.500" stroke="#fff" strokeWidth="1.300" />
          </Svg>
        </button>
        <button type="button" aria-label="Meet Now" className="flex w-6 justify-center">
          <Svg className="h-4 w-3" box="0 0 12 16">
            <path d="M2 2.500c2-2 6-2 8 0M2 13.500c2 2 6 2 8 0M1.500 5.500h6v5h-6zM7.500 7.500l3-2v5l-3-2" stroke="#fff" strokeWidth="1.200" />
          </Svg>
        </button>
        <button type="button" aria-label="Network" className="flex w-6 justify-center">
          <Svg className="size-4">
            <path d="M5.500 2.500h10v8h-11V6M.5 1.500h4v3h-4zM2.500 4.500v6M9.500 10.500v3M6 13.500h7" stroke="#fff" />
          </Svg>
        </button>
        <button type="button" aria-label="Volume" className="flex w-6 justify-center">
          <Svg className="size-4">
            <path d="M.5 5.500h3l4-3.500v12l-4-3.500h-3zM9.500 6c1 1.200 1 2.800 0 4M11.500 4c2 2.500 2 5.500 0 8M13.500 2c3 3.500 3 8.500 0 12" stroke="#fff" />
          </Svg>
        </button>
        <button type="button" className="flex w-16 flex-col items-center leading-[18px]">
          <span>10:19 AM</span>
          <span>4/22/2025</span>
        </button>
        <button type="button" aria-label="Notifications" className="flex w-10 justify-center">
          <Svg className="size-4">
            <path d="M.5 1.500h15v11h-5L8 15l-2.500-2.500h-5z" stroke="#fff" />
          </Svg>
        </button>
      </div>
      <button type="button" aria-label="Show desktop" className="ml-2 w-[5px] border-l border-[#5b6570]" />
    </footer>
  )
}

export default function App() {
  return (
    <div className="flex h-screen flex-col overflow-hidden font-['Open_Sans','Noto_Sans',sans-serif] text-[11px] text-black">
      <div className="relative min-h-0 flex-1 overflow-hidden bg-[radial-gradient(ellipse_110px_160px_at_80%_33%,#0068ff_0%,transparent_100%),linear-gradient(97deg,#00a4f6_0%,#00b0ff_22%,#0098f0_45%,#0070dc_66%,#004cc8_84%,#003ab4_100%)]">
        <div className="grid w-[300px] auto-rows-[108px] grid-cols-4 items-start">
          {DESKTOP_ICONS.map((item) => (
            <DesktopIcon key={item.id} {...item} />
          ))}
        </div>
        <ArchiveWindow />
        <NetworkWindow />
        <ContextMenu />
        <Watermark />
      </div>
      <Taskbar />
    </div>
  )
}
